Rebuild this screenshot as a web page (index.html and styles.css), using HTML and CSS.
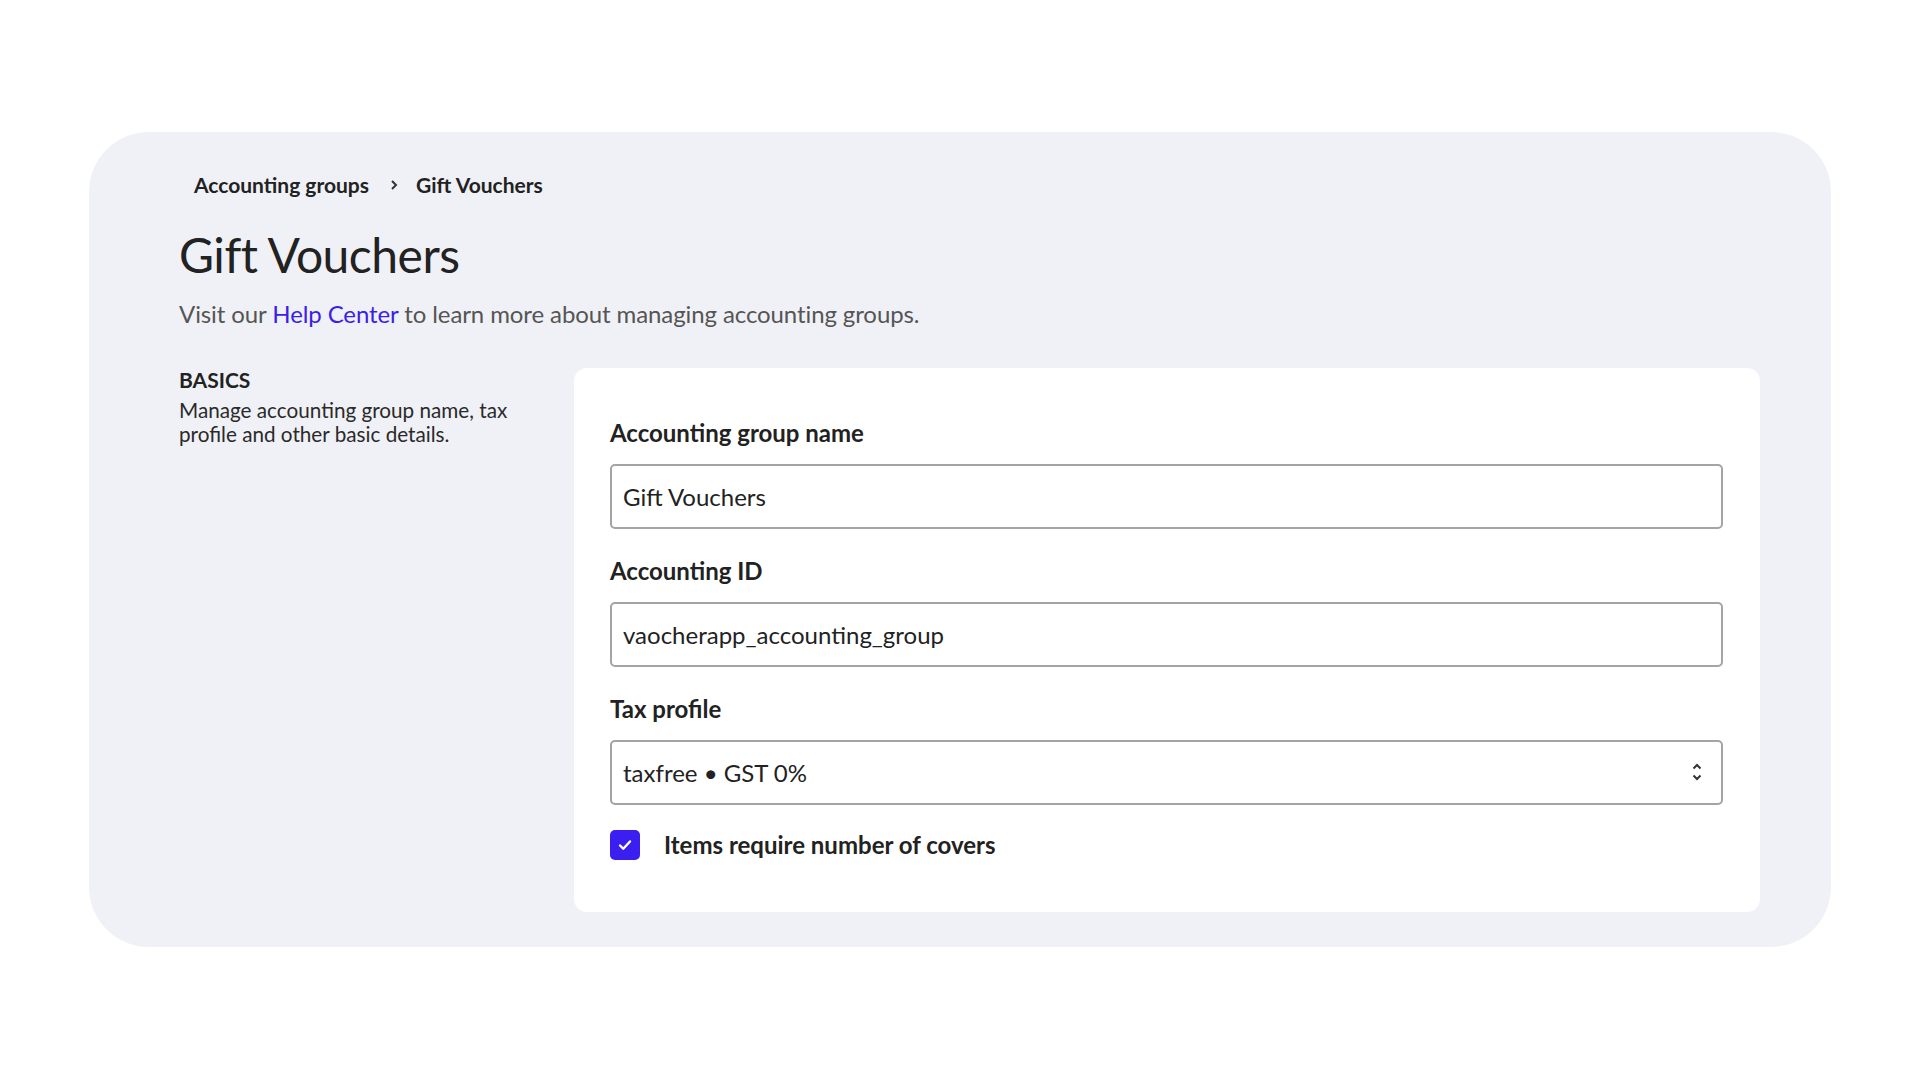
FILE: index.html
```html
<!DOCTYPE html>
<html>
	<head>
		<meta charset="UTF-8">
		<title>Gift Vouchers</title>
		<link rel="stylesheet" href="styles.css">
	</head>
	<body>
		<div class="panel">
			<div class="crumbs">
				<a href="javascript:;">Accounting groups</a>
				<svg class="crumb-sep" width="10" height="14" viewBox="0 0 10 14"><path d="M3 3l4 4-4 4" fill="none" stroke="#333" stroke-width="2"/></svg>
				<span>Gift Vouchers</span>
			</div>
			<h1 class="title">Gift Vouchers</h1>
			<p class="intro">Visit our <a href="javascript:;">Help Center</a> to learn more about managing accounting groups.</p>

			<div class="section">
				<div class="section-info">
					<h2>BASICS</h2>
					<p>Manage accounting group name, tax profile and other basic details.</p>
				</div>
				<div class="card">
					<div class="field">
						<label for="name">Accounting group name</label>
						<input id="name" type="text" value="Gift Vouchers">
					</div>
					<div class="field">
						<label for="accId">Accounting ID</label>
						<input id="accId" type="text" value="vaocherapp_accounting_group">
					</div>
					<div class="field">
						<label for="tax">Tax profile</label>
						<div class="select-wrap">
							<select id="tax">
								<option>taxfree &bull; GST 0%</option>
							</select>
							<svg class="select-arrows" width="12" height="20" viewBox="0 0 12 20"><path d="M2.5 6.5L6 3l3.5 3.5M2.5 13.5L6 17l3.5-3.5" fill="none" stroke="#333" stroke-width="2"/></svg>
						</div>
					</div>
					<label class="check">
						<span class="box"><svg width="18" height="18" viewBox="0 0 18 18"><path d="M4 9.5l3.3 3.2L14 5.5" fill="none" stroke="#fff" stroke-width="2.4" stroke-linecap="round" stroke-linejoin="round"/></svg></span>
						Items require number of covers
					</label>
				</div>
			</div>
		</div>
	</body>
</html>
```

FILE: styles.css
```css
*{
	margin: 0;
	padding: 0;
	box-sizing: border-box;
}
body{
	font-family: Lato, "Noto Sans", sans-serif;
	color: #222;
	background: #fff;
}
.panel{
	margin: 132px 89px 0;
	padding: 41px 71px 35px 90px;
	background: #f0f1f6;
	border-radius: 60px;
}
.crumbs{
	display: flex;
	align-items: center;
	padding-left: 15px;
	font-size: 21px;
	font-weight: 700;
	line-height: 24px;
}
.crumbs a{
	color: #222;
	text-decoration: none;
}
.crumb-sep{
	margin: 0 17px 0 20px;
}
.title{
	margin-top: 29px;
	font-size: 48px;
	font-weight: 400;
	line-height: 57px;
	letter-spacing: -0.5px;
	color: #222;
}
.intro{
	margin-top: 16px;
	font-size: 24px;
	line-height: 29px;
	letter-spacing: -0.1px;
	color: #555;
}
.intro a{
	color: #3a1fe8;
	text-decoration: none;
}
.section{
	display: flex;
	gap: 55px;
	margin-top: 40px;
}
.section-info{
	width: 340px;
	flex: none;
}
.section-info h2{
	font-size: 21px;
	font-weight: 700;
	line-height: 24px;
}
.section-info p{
	margin-top: 6px;
	font-size: 20.7px;
	line-height: 24px;
	color: #2a2a2a;
}
.card{
	flex: 1;
	background: #fff;
	border-radius: 13px;
	padding: 52px 37px 52px 36px;
}
.field{
	margin-bottom: 29px;
}
.field label{
	display: block;
	margin-bottom: 18px;
	font-size: 24px;
	font-weight: 700;
	line-height: 26px;
}
.field input,
.field select{
	display: block;
	width: 100%;
	height: 65px;
	padding: 0 11px;
	border: 2px solid #a4a4a4;
	border-radius: 5px;
	background: #fff;
	font-family: Lato, "Noto Sans", sans-serif;
	font-size: 24px;
	color: #222;
	outline: none;
}
.field select{
	appearance: none;
	-webkit-appearance: none;
}
.select-wrap{
	position: relative;
}
.select-arrows{
	position: absolute;
	right: 20px;
	top: 22px;
	pointer-events: none;
}
.check{
	display: flex;
	align-items: center;
	gap: 24px;
	margin-top: -4px;
	font-size: 24px;
	font-weight: 700;
	line-height: 30px;
}
.box{
	width: 30px;
	height: 30px;
	border-radius: 5px;
	background: #3a1ff0;
	display: flex;
	align-items: center;
	justify-content: center;
}
```
